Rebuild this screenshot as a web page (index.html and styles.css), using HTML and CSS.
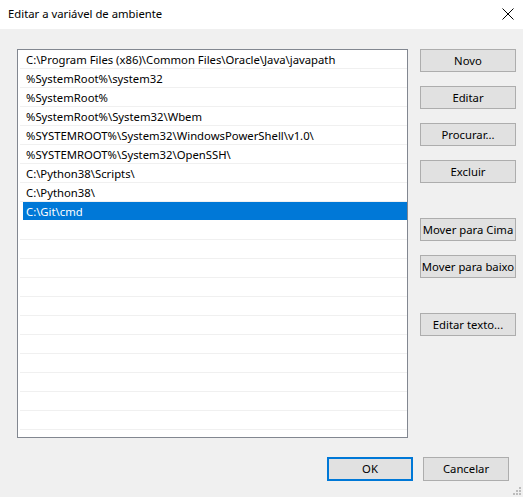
FILE: index.html
```html
<!DOCTYPE html>
<html lang="pt">
<head>
<meta charset="utf-8">
<title>Editar a variável de ambiente</title>
<link rel="stylesheet" href="styles.css">
</head>
<body>
<div class="window">
  <div class="titlebar">
    <span class="title">Editar a variável de ambiente</span>
    <svg class="close" width="12" height="12" viewBox="0 0 12 12"><path d="M0.5 0.5 L11.5 11.5 M11.5 0.5 L0.5 11.5" stroke="#000" stroke-width="1" fill="none"/></svg>
  </div>
  <div class="content">
    <div class="main">
      <div class="list">
        <div class="row">C:\Program Files (x86)\Common Files\Oracle\Java\javapath</div>
        <div class="row">%SystemRoot%\system32</div>
        <div class="row">%SystemRoot%</div>
        <div class="row">%SystemRoot%\System32\Wbem</div>
        <div class="row">%SYSTEMROOT%\System32\WindowsPowerShell\v1.0\</div>
        <div class="row">%SYSTEMROOT%\System32\OpenSSH\</div>
        <div class="row">C:\Python38\Scripts\</div>
        <div class="row">C:\Python38\</div>
        <div class="row selected"><span class="sel">C:\Git\cmd</span></div>
        <div class="row"></div>
        <div class="row"></div>
        <div class="row"></div>
        <div class="row"></div>
        <div class="row"></div>
        <div class="row"></div>
        <div class="row"></div>
        <div class="row"></div>
        <div class="row"></div>
        <div class="row"></div>
        <div class="row"></div>
        <div class="row"></div>
      </div>
      <div class="side">
        <button class="btn">Novo</button>
        <button class="btn">Editar</button>
        <button class="btn">Procurar...</button>
        <button class="btn">Excluir</button>
        <button class="btn group">Mover para Cima</button>
        <button class="btn">Mover para baixo</button>
        <button class="btn group">Editar texto...</button>
      </div>
    </div>
    <div class="footer">
      <button class="btn dlg default">OK</button>
      <button class="btn dlg">Cancelar</button>
    </div>
  </div>
  <svg class="grip" width="10" height="10" viewBox="0 0 10 10">
    <rect x="7" y="1" width="2" height="2" fill="#bcbcbc"/>
    <rect x="4" y="4" width="2" height="2" fill="#bcbcbc"/>
    <rect x="7" y="4" width="2" height="2" fill="#bcbcbc"/>
    <rect x="1" y="7" width="2" height="2" fill="#bcbcbc"/>
    <rect x="4" y="7" width="2" height="2" fill="#bcbcbc"/>
    <rect x="7" y="7" width="2" height="2" fill="#bcbcbc"/>
  </svg>
</div>
</body>
</html>
```
FILE: styles.css
```css
* { box-sizing: border-box; }
html, body {
  margin: 0;
  padding: 0;
  width: 523px;
  height: 497px;
  overflow: hidden;
  background: #f0f0f0;
  font-family: "Noto Sans", "Open Sans", "Liberation Sans", sans-serif;
  font-size: 11.3px;
  color: #000;
}
.window {
  position: relative;
  width: 523px;
  height: 497px;
}
.titlebar {
  height: 29px;
  background: #fff;
  display: flex;
  align-items: center;
  justify-content: space-between;
  padding: 0 9px 0 8px;
}
.title {
  font-size: 11.3px;
  line-height: 16px;
  margin-top: -1px;
}
.close {
  display: block;
  margin-top: -1px;
}
.content {
  padding: 20px 0 0 17px;
}
.main {
  display: flex;
  align-items: flex-start;
}
.list {
  width: 391px;
  height: 389px;
  border: 1px solid #828790;
  background: #fff;
  overflow: hidden;
  padding: 0 0 0 2px;
}
.row {
  height: 19px;
  border-bottom: 1px solid #f0f0f0;
  line-height: 19px;
  padding-left: 6px;
  white-space: nowrap;
  font-size: 11.3px;
}
.row.selected {
  padding-left: 3px;
  border-bottom-color: #fff;
}
.sel {
  display: block;
  background: #0078d7;
  color: #fff;
  height: 18px;
  line-height: 19px;
  padding-left: 3px;
}
.side {
  margin-left: 12px;
  display: flex;
  flex-direction: column;
  gap: 14px;
}
.btn {
  width: 96px;
  height: 23px;
  background: #e1e1e1;
  border: 1px solid #adadad;
  font-family: inherit;
  font-size: 11.3px;
  color: #000;
  padding: 0;
  line-height: 20px;
  white-space: nowrap;
}
.btn.group {
  margin-top: 21px;
}
.footer {
  display: flex;
  justify-content: flex-end;
  gap: 10px;
  padding-right: 14px;
  margin-top: 19px;
}
.btn.dlg {
  width: 86px;
  height: 24px;
}
.btn.default {
  border: 2px solid #0078d7;
}
.grip {
  position: absolute;
  right: 1px;
  bottom: 1px;
}
```
